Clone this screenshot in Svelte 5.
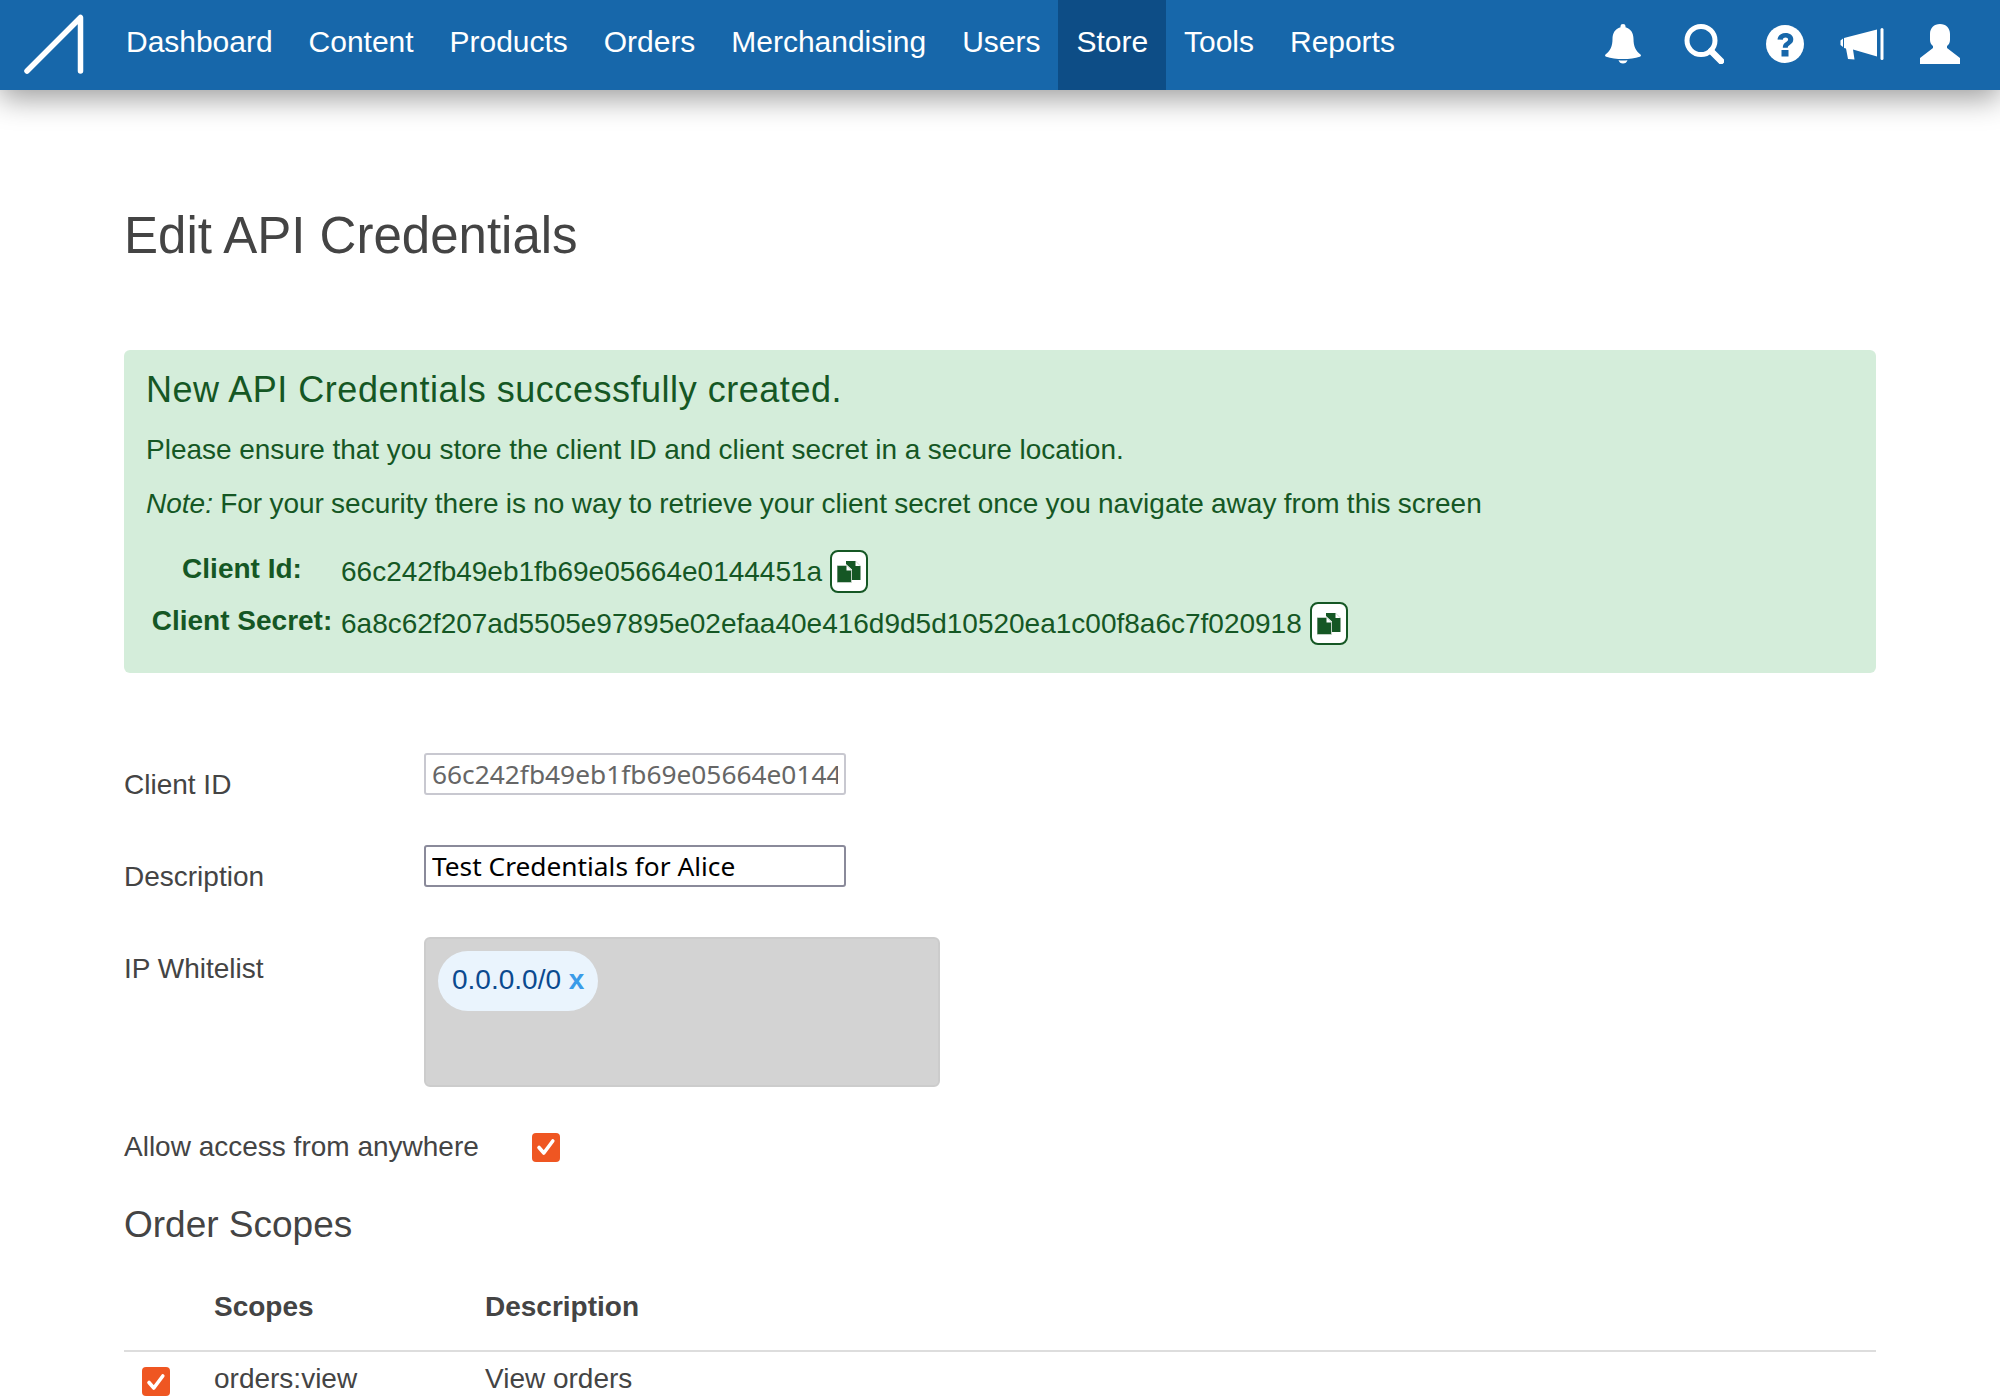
<script>
  const navItems = ["Dashboard", "Content", "Products", "Orders", "Merchandising", "Users", "Store", "Tools", "Reports"];
  const activeItem = "Store";
  const clientId = "66c242fb49eb1fb69e05664e0144451a";
  const clientSecret = "6a8c62f207ad5505e97895e02efaa40e416d9d5d10520ea1c00f8a6c7f020918";
  const scopes = [{ name: "orders:view", description: "View orders" }];
</script>

{#snippet copyIcon()}
  <button class="copy" type="button" aria-label="Copy">
    <svg width="24" height="22" viewBox="0 0 24 22">
      <path d="M9 0h9.500L23.500 5v14H15V8.500L9 3z" fill="#155724" />
      <path d="M0 4.500h9.500L14.500 9.500V21.500H0z" fill="#155724" stroke="#cfd8d0" stroke-width="0.800" />
      <path d="M9.500 4.500l5 5h-5z" fill="#fff" />
      <path d="M18.500 0l5 5h-5z" fill="#fff" />
    </svg>
  </button>
{/snippet}

{#snippet check()}
  <span class="check">
    <svg width="22" height="22" viewBox="0 0 22 22">
      <path d="M4 11.500l4.800 5.500 9-12" fill="none" stroke="#fff" stroke-width="3.600" stroke-linecap="round" stroke-linejoin="round" />
    </svg>
  </span>
{/snippet}

<div class="page">
  <header class="topbar">
    <a class="logo" href="#top" aria-label="Home">
      <svg width="64" height="64" viewBox="0 0 64 64">
        <path d="M4 58L57.500 4.500V58" fill="none" stroke="#fff" stroke-width="5.500" stroke-linecap="round" stroke-linejoin="round" />
      </svg>
    </a>
    <nav class="menu">
      {#each navItems as item}
        <a href="#top" class:active={item === activeItem}>{item}</a>
      {/each}
    </nav>
    <div class="icons">
      <svg class="bell" width="36" height="40" viewBox="0 0 36 40" fill="#fff">
        <path d="M15.500 2a2.500 2 0 0 1 5 0v1.300C26 4.800 28.500 9.500 28.500 15c0 7 2 11.500 7 15.500.8.800.5 1.700-.7 2.200C30 34.500 24.500 35 18 35S6 34.500 1.200 32.700C0 32.200-.3 31.300.5 30.500c5-4 7-8.500 7-15.500C7.500 9.500 10 4.800 15.500 3.300z" />
        <path d="M13.500 36.200c3 .3 6 .3 9 0-.6 2-2.300 3.300-4.500 3.300s-3.900-1.300-4.500-3.300z" />
      </svg>
      <svg class="search" width="40" height="40" viewBox="0 0 40 40" fill="none">
        <circle cx="17" cy="16.500" r="14" stroke="#fff" stroke-width="5" />
        <path d="M27 27l10 10" stroke="#fff" stroke-width="6.500" stroke-linecap="round" />
      </svg>
      <svg width="38" height="38" viewBox="0 0 38 38">
        <circle cx="19" cy="19" r="19" fill="#fff" />
        <path d="M11.500 14.500c.5-4.200 3.700-6.500 8-6.500 4.600 0 7.800 2.500 7.800 6.300 0 2.900-1.600 4.300-3.600 5.600-1.500 1-1.900 1.500-1.900 2.800h-5c0-2.800.9-4.200 3-5.500 1.600-1 2.300-1.600 2.300-2.600 0-1.300-1-2.100-2.500-2.100-1.600 0-2.600.9-2.800 2.300z" fill="#1767aa" />
        <rect x="15.500" y="25" width="7" height="6.500" fill="#1767aa" />
      </svg>
      <svg width="44" height="32" viewBox="0 0 44 32" fill="#fff">
        <path d="M0.500 12.500L3 10.500v8.500l-2.500-2z" />
        <path d="M4 10L37 1.500v27L13 21.500l1.500 10-6.500-.5L6 20.500 4 20z" />
        <rect x="40.500" y="0" width="3" height="32" rx="1.500" />
      </svg>
      <svg width="40" height="40" viewBox="0 0 40 40" fill="#fff">
        <path d="M20 0c6 0 10 4 10 10v6c0 3-1.500 5-3 6v2l13 10v6H0v-6l13-10v-2c-1.500-1-3-3-3-6v-6C10 4 14 0 20 0z" />
      </svg>
    </div>
  </header>

  <main class="content">
    <h1>Edit API Credentials</h1>

    <section class="alert">
      <h2>New API Credentials successfully created.</h2>
      <p>Please ensure that you store the client ID and client secret in a secure location.</p>
      <p class="note"><em>Note:</em> For your security there is no way to retrieve your client secret once you navigate away from this screen</p>
      <div class="creds">
        <strong>Client Id:</strong>
        <span class="value">{clientId}{@render copyIcon()}</span>
        <strong>Client Secret:</strong>
        <span class="value">{clientSecret}{@render copyIcon()}</span>
      </div>
    </section>

    <div class="field">
      <label for="cid">Client ID</label>
      <input id="cid" class="disabled" value={clientId} disabled />
    </div>
    <div class="field">
      <label for="desc">Description</label>
      <input id="desc" value="Test Credentials for Alice" />
    </div>
    <div class="field ip">
      <span class="label">IP Whitelist</span>
      <div class="tagbox">
        <span class="chip">0.0.0.0/0 <b>x</b></span>
      </div>
    </div>

    <div class="anywhere">
      <span>Allow access from anywhere</span>
      {@render check()}
    </div>

    <h3>Order Scopes</h3>
    <table>
      <thead>
        <tr>
          <th class="tick"></th>
          <th class="name">Scopes</th>
          <th>Description</th>
        </tr>
      </thead>
      <tbody>
        {#each scopes as scope}
          <tr>
            <td class="tick">{@render check()}</td>
            <td>{scope.name}</td>
            <td>{scope.description}</td>
          </tr>
        {/each}
      </tbody>
    </table>
  </main>
</div>

<style>
  :global(body) {
    background: #fff;
  }
  .page {
    height: 1400px;
    overflow: hidden;
    font-family: "Liberation Sans", Arial, sans-serif;
    color: #444;
    font-size: 28px;
  }
  .topbar {
    height: 90px;
    background: #1767aa;
    display: flex;
    align-items: stretch;
    box-shadow: 0 8px 30px rgba(0, 0, 0, 0.4);
    position: relative;
  }
  .logo {
    width: 108px;
    display: flex;
    align-items: center;
    padding-left: 23px;
    box-sizing: border-box;
  }
  .menu {
    display: flex;
  }
  .menu a {
    color: #fff;
    text-decoration: none;
    line-height: 84px;
    padding: 0 18px;
    font-size: 30px;
    letter-spacing: -0.02px;
  }
  .menu a.active {
    background: #0d4d86;
  }
  .icons {
    margin-left: auto;
    display: flex;
    align-items: center;
    gap: 36px;
    padding: 0 40px 2px 0;
  }
  .icons .bell {
    margin-right: 7px;
  }
  .icons .search {
    margin-right: 6px;
  }
  .content {
    padding: 0 124px;
  }
  h1 {
    font-weight: normal;
    font-size: 51px;
    line-height: 60px;
    margin: 116px 0 84px;
    color: #444;
  }
  .alert {
    background: #d4edda;
    color: #155724;
    border-radius: 6px;
    height: 323px;
    box-sizing: border-box;
    padding: 17px 22px;
    margin-bottom: 80px;
  }
  .alert h2 {
    font-weight: normal;
    font-size: 36px;
    line-height: 46px;
    margin: 0 0 18px;
    letter-spacing: 0.53px;
  }
  .alert p {
    margin: 0 0 17px;
    line-height: 37px;
    word-spacing: -0.2px;
  }
  .alert p.note {
    word-spacing: -0.55px;
  }
  .creds {
    display: grid;
    grid-template-columns: 192px 1fr;
    column-gap: 3px;
    row-gap: 9px;
    margin-top: 28px;
  }
  .creds strong {
    text-align: center;
    line-height: 38px;
  }
  .value {
    display: flex;
    align-items: center;
    gap: 8px;
    height: 43px;
  }
  .copy {
    width: 38px;
    height: 43px;
    padding: 0;
    background: #fff;
    border: 2px solid #155724;
    border-radius: 8px;
    display: flex;
    align-items: center;
    justify-content: center;
  }
  .field {
    display: flex;
    align-items: flex-start;
    height: 42px;
    margin-bottom: 50px;
  }
  .field label,
  .label {
    width: 300px;
    line-height: 42px;
    padding-top: 11px;
  }
  input {
    width: 422px;
    height: 42px;
    box-sizing: border-box;
    border: 2px solid #8a8a9a;
    border-radius: 3px;
    padding: 0 6px;
    font-family: "Noto Sans", sans-serif;
    font-size: 26.3px;
    color: #000;
    background: #fff;
  }
  input.disabled {
    color: #666;
    border-color: #c8c8d0;
  }
  .field.ip {
    height: 150px;
    margin-bottom: 44px;
  }
  .label {
    padding-top: 0;
    margin-top: 11px;
  }
  .tagbox {
    width: 516px;
    height: 150px;
    box-sizing: border-box;
    background: #d3d3d3;
    border: 2px solid #ccc;
    border-radius: 6px;
    padding: 12px;
  }
  .chip {
    display: inline-block;
    height: 60px;
    line-height: 58px;
    padding: 0 14px;
    border-radius: 30px;
    background: #eaf4fd;
    color: #0b4a8f;
  }
  .chip b {
    color: #3a9be8;
  }
  .anywhere {
    display: flex;
    align-items: center;
    gap: 53px;
  }
  .check {
    display: inline-flex;
    align-items: center;
    justify-content: center;
    width: 28px;
    height: 29px;
    background: #ef5622;
    border-radius: 4px;
  }
  h3 {
    font-weight: normal;
    font-size: 37px;
    line-height: 44px;
    margin: 40px 0 40px;
    color: #444;
  }
  table {
    width: 100%;
    border-collapse: collapse;
  }
  th {
    text-align: left;
    padding: 0 0 23px;
    line-height: 40px;
    border-bottom: 2px solid #ddd;
  }
  td {
    padding: 7px 0;
    line-height: 40px;
  }
  td .check {
    vertical-align: middle;
    margin-top: 2px;
  }
  .tick {
    width: 90px;
    padding-left: 18px;
    box-sizing: border-box;
  }
  .name {
    width: 271px;
  }
</style>
